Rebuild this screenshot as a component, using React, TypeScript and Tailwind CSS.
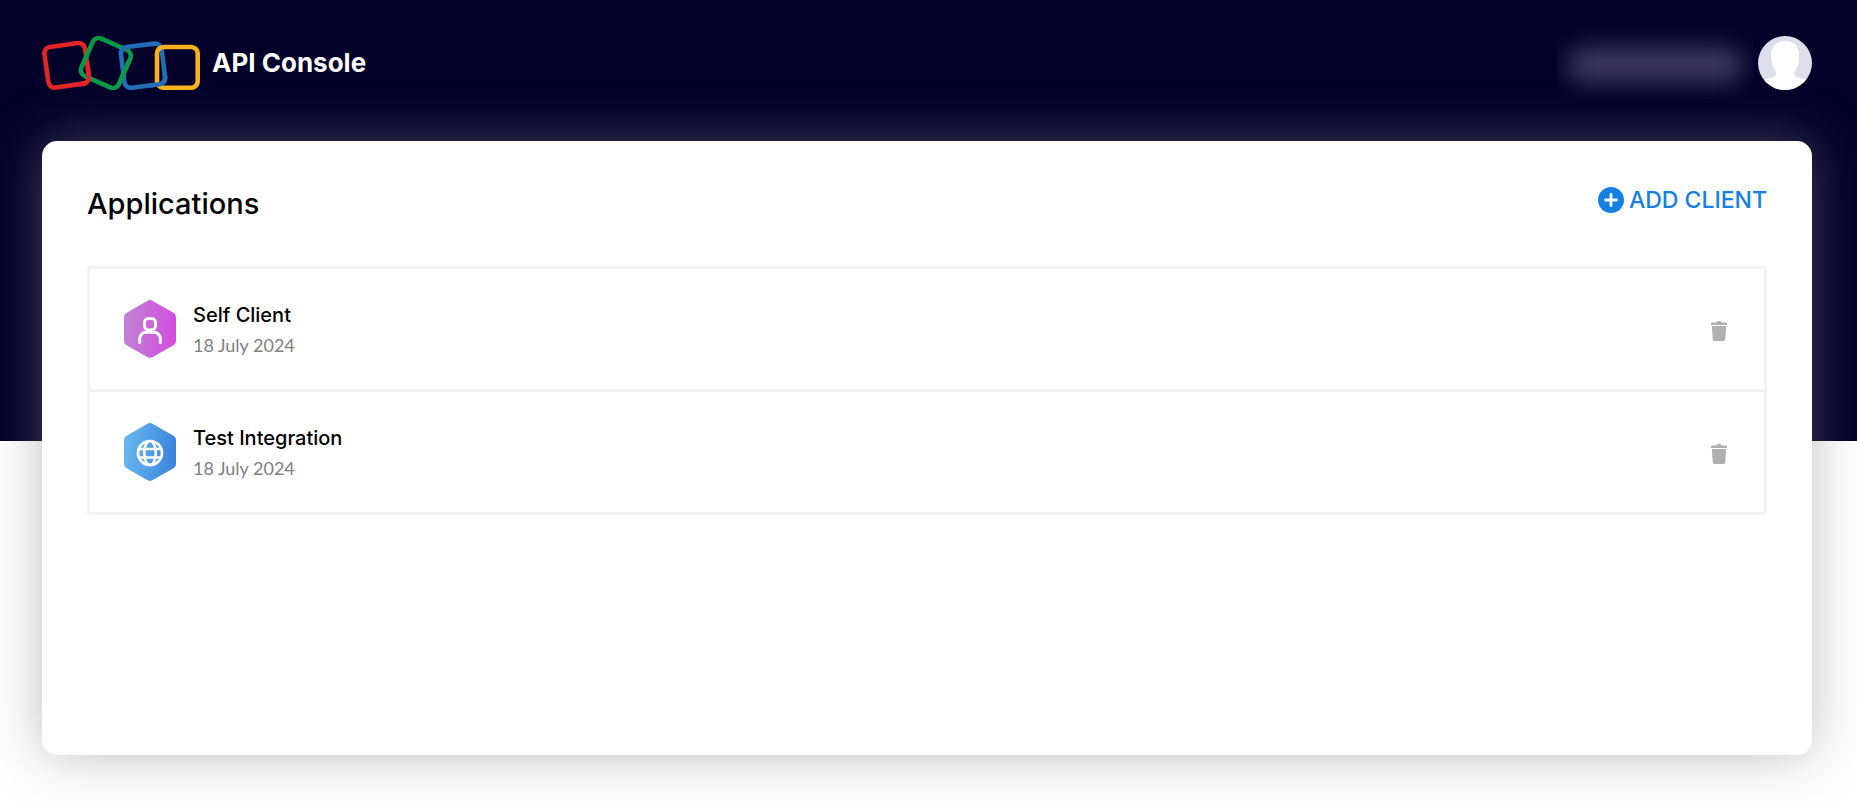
type ClientKind = 'self' | 'server';

type Client = {
  id: string;
  name: string;
  created: string;
  kind: ClientKind;
};

const CLIENTS: Client[] = [
  { id: 'self', name: 'Self Client', created: '18 July 2024', kind: 'self' },
  { id: 'test', name: 'Test Integration', created: '18 July 2024', kind: 'server' },
];

const HEX_COLORS: Record<ClientKind, { from: string; to: string }> = {
  self:   { from: '#c182d3', to: '#d24de0' },
  server: { from: '#68b8f0', to: '#3a82dd' },
};

function Logo() {
  return (
    <svg width="158" height="54" viewBox="0 0 158 54" fill="none" strokeWidth="4.6" aria-hidden="true">
      <defs>
        <clipPath id="red-front"><rect x="38" y="32" width="16" height="22" /></clipPath>
        <clipPath id="green-front"><rect x="76" y="24" width="16" height="30" /></clipPath>
        <clipPath id="blue-front"><rect x="108" y="38" width="20" height="16" /></clipPath>
        <rect id="sq-red" x="4.2" y="8.8" width="41" height="41" rx="6.5" stroke="#e42527" transform="rotate(-8 24.7 29.3)" />
        <rect id="sq-green" x="43.3" y="6.5" width="41" height="41" rx="6.5" stroke="#089949" transform="rotate(24 63.8 27)" />
        <rect id="sq-blue" x="80.5" y="9.2" width="41" height="41" rx="6.5" stroke="#226db4" transform="rotate(-7 101 29.7)" />
      </defs>
      <use href="#sq-red" />
      <use href="#sq-green" />
      <use href="#sq-blue" />
      <rect x="115" y="11" width="40.700" height="40.700" rx="6.5" stroke="#f9b21d" />
      {/* second pass links the squares into a chain */}
      <use href="#sq-red" clipPath="url(#red-front)" />
      <use href="#sq-green" clipPath="url(#green-front)" />
      <use href="#sq-blue" clipPath="url(#blue-front)" />
    </svg>
  );
}

function Avatar() {
  return (
    <svg width="54" height="54" viewBox="0 0 54 54" className="rounded-full" aria-hidden="true">
      <rect width="54" height="54" fill="#dbdfea" />
      <path
        fill="#fff"
        d="M27 5C19 5 13 10 13 18c0 3 0 4 .6 7 .3 1.500.7 4 1.400 5 .8 3 2 4.500 3 5.500v3c0 1.500-1 2.200-3 2.700-3 .8-6 1-9 2.300v11h42v-11c-3-1.300-6-1.500-8.500-2.300-2-.5-3-1.200-3-2.700v-3c1.200-1.500 2.200-3 2.800-5.500.8-1 1.300-3 1.400-5 .6-2 .5-4 .3-7C41 10 35 5 27 5z"
      />
    </svg>
  );
}

function HexIcon({ kind }: { kind: ClientKind }) {
  const { from, to } = HEX_COLORS[kind];
  return (
    <svg width="52" height="58" viewBox="0 0 52 58" fill="none" aria-hidden="true" className="shrink-0">
      <defs>
        <linearGradient id={`hex-${kind}`} x1="0" y1="0.4" x2="1" y2="0.5">
          <stop stopColor={from} />
          <stop offset="1" stopColor={to} />
        </linearGradient>
      </defs>
      <path
        fill={`url(#hex-${kind})`}
        d="M23.200 .9Q26-.7 28.800 .9L49 12.600Q52 14.300 52 17.600V40.400Q52 43.700 49 45.400L28.800 57.100Q26 58.700 23.200 57.100L3 45.400Q0 43.700 0 40.400V17.600Q0 14.300 3 12.600Z"
      />
      {kind === 'self' ? (
        <g stroke="#fff" strokeWidth="2.900" strokeLinecap="round">
          <rect x="20.500" y="18.500" width="11" height="11.400" rx="3.800" />
          <path d="M15.700 42.500V38.700a6.500 6.500 0 0 1 6.500-6.500h7.600a6.500 6.500 0 0 1 6.500 6.500v3.800" />
        </g>
      ) : (
        <g stroke="#fff" strokeWidth="2.700">
          <circle cx="26" cy="30" r="12" />
          <ellipse cx="26" cy="30" rx="5.800" ry="12" />
          <path d="M15 26h22M15 34.500h22" />
        </g>
      )}
    </svg>
  );
}

function TrashIcon() {
  return (
    <svg width="16" height="20" viewBox="0 0 16 20" fill="#b0b0b0" aria-hidden="true">
      <path d="M0 4V2.700Q0 1.500 1.200 1.500H5.300Q6 0 7 0H9Q10 0 10.700 1.500H14.800Q16 1.500 16 2.700V4Z" />
      <path d="M.8 5H15.200L14.200 18.300Q14 20 12.400 20H3.600Q2 20 1.800 18.300Z" />
    </svg>
  );
}

export default function App() {
  return (
    <div className="min-h-screen bg-white bg-[linear-gradient(#03002a,#03002a)] bg-[length:100%_441px] bg-no-repeat pt-9 pr-[45px] pb-12 pl-[42px] font-['Inter',sans-serif] text-black">
      {/* Header */}
      <header className="flex h-[54px] items-center justify-between">
        <div className="flex items-center gap-3">
          <Logo />
          <h1 className="text-[26px] leading-8 font-bold text-white">API Console</h1>
        </div>
        <div className="flex items-center gap-[5px]">
          {/* account name stays hidden behind a blur */}
          <div className="flex h-18 w-[196px] items-center justify-center overflow-hidden pt-1" aria-hidden="true">
            <div className="h-8 w-[172px] rounded-lg bg-[#464063] blur-[13px]" />
          </div>
          <button type="button" aria-label="Account" className="rounded-full">
            <Avatar />
          </button>
        </div>
      </header>

      {/* Applications */}
      <main className="mt-[51px] min-h-[614px] rounded-[15px] bg-white px-[45px] pt-[43px] pb-12 shadow-[0_0_52px_rgba(128,128,128,0.5)]">
        <div className="flex items-start justify-between">
          <h2 className="text-[29px] leading-10 font-medium">Applications</h2>
          <button type="button" className="flex items-center gap-[5px] text-[23px] leading-8 font-medium text-[#1480e2]">
            <svg width="26" height="26" viewBox="0 0 26 26" aria-hidden="true">
              <circle cx="13" cy="13" r="13" fill="#1480e2" />
              <path d="M13 7.500v11M7.500 13h11" stroke="#fff" strokeWidth="2.800" strokeLinecap="round" />
            </svg>
            ADD CLIENT
          </button>
        </div>

        <ul className="mt-[42px] divide-y-3 divide-[#f3f3f3] rounded-[3px] border-3 border-[#f3f3f3]">
          {CLIENTS.map(c => (
            <li key={c.id} className="box-content flex h-[120px] items-center pr-[37px] pl-[34px]">
              <HexIcon kind={c.kind} />
              <div className="ml-[17px] flex-1 pt-0.5">
                <p className="text-[20px] leading-[30px] font-medium">{c.name}</p>
                <p className="font-['Lato',sans-serif] text-[18px] leading-[30px] text-[#808080]">{c.created}</p>
              </div>
              <button type="button" aria-label={`Delete ${c.name}`} className="pt-1">
                <TrashIcon />
              </button>
            </li>
          ))}
        </ul>
      </main>
    </div>
  );
}
